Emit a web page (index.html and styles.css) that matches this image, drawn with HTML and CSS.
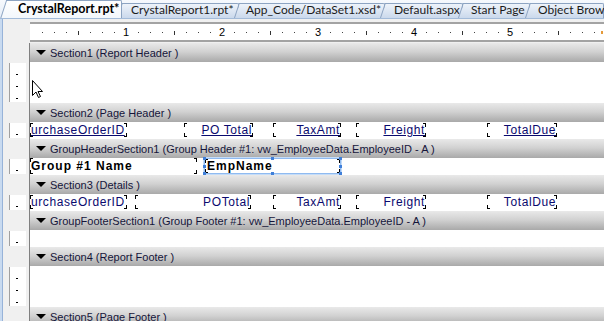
FILE: index.html
```html
<!doctype html>
<html lang="en">
<head>
    <meta charset="UTF-8">
    <meta name="viewport" content="width=device-width, initial-scale=1.0">
    <title>CrystalReport.rpt</title>
    <link rel="stylesheet" href="styles.css">
</head>
<body>
<div class="tabs">
    <div class="tab active t1">CrystalReport.rpt*</div>
    <div class="tab t2">CrystalReport1.rpt*</div>
    <div class="tab t3">App_Code/DataSet1.xsd*</div>
    <div class="tab t4">Default.aspx</div>
    <div class="tab t5">Start Page</div>
    <div class="tab t6">Object Brows</div>
</div>

<div class="frame">
    <div class="canvas">
        <div class="ruler">
            <span class="inch"><b>1</b></span>
            <span class="inch"><b>2</b></span>
            <span class="inch"><b>3</b></span>
            <span class="inch"><b>4</b></span>
            <span class="inch"><b>5</b></span>
        </div>

        <div class="row head"><span class="vr"></span><div class="bar"><i class="tri"></i>Section1 (Report Header&nbsp;)</div></div>
        <div class="row body tall"><span class="vr"></span>
            <div class="area">
                <svg class="cursor" width="13" height="20" viewBox="0 0 13 20">
                    <path d="M0.5 0.5 L0.5 15.5 L4 12 L6.5 17.5 L8.5 16.5 L6 11.5 L10.5 11.5 Z" fill="#fff" stroke="#000" stroke-width="1"/>
                </svg>
            </div>
        </div>

        <div class="row head"><span class="vr"></span><div class="bar"><i class="tri"></i>Section2 (Page Header&nbsp;)</div></div>
        <div class="row body"><span class="vr"></span>
            <div class="area">
                <span class="fld ul c-id">urchaseOrderID</span>
                <span class="fld ul r c-po">PO Total</span>
                <span class="fld ul r c-tax">TaxAmt</span>
                <span class="fld ul r c-fr">Freight</span>
                <span class="fld ul r c-due">TotalDue</span>
            </div>
        </div>

        <div class="row head"><span class="vr"></span><div class="bar"><i class="tri"></i>GroupHeaderSection1 (Group Header #1: vw_EmployeeData.EmployeeID - A )</div></div>
        <div class="row body"><span class="vr"></span>
            <div class="area">
                <span class="fld bold c-grp">Group #1 Name</span>
                <span class="fld bold sel c-emp">EmpName</span>
            </div>
        </div>

        <div class="row head"><span class="vr"></span><div class="bar"><i class="tri"></i>Section3 (Details&nbsp;)</div></div>
        <div class="row body"><span class="vr"></span>
            <div class="area">
                <span class="fld c-id">urchaseOrderID</span>
                <span class="fld r c-po2">POTotal</span>
                <span class="fld r c-tax">TaxAmt</span>
                <span class="fld r c-fr">Freight</span>
                <span class="fld r c-due">TotalDue</span>
            </div>
        </div>

        <div class="row head"><span class="vr"></span><div class="bar"><i class="tri"></i>GroupFooterSection1 (Group Footer #1: vw_EmployeeData.EmployeeID - A )</div></div>
        <div class="row body"><span class="vr"></span><div class="area"></div></div>

        <div class="row head"><span class="vr"></span><div class="bar"><i class="tri"></i>Section4 (Report Footer&nbsp;)</div></div>
        <div class="row body tall"><span class="vr"></span><div class="area"></div></div>

        <div class="row head"><span class="vr"></span><div class="bar"><i class="tri"></i>Section5 (Page Footer&nbsp;)</div></div>
    </div>
</div>
</body>
</html>
```

FILE: styles.css
```css
html, body {
    margin: 0;
    width: 604px;
    height: 321px;
    overflow: hidden;
    background-color: #f0f0f0;
}

/* document tabs */

.tabs {
    display: flex;
    align-items: flex-end;
    height: 18px;
    border-bottom: 1px solid #a3bbd9;
    background: linear-gradient(#f6f9fd, #e6eef8);
    overflow: hidden;
}

.tab {
    position: relative;
    z-index: 0;
    flex: none;
    box-sizing: border-box;
    height: 15px;
    line-height: 14px;
    padding-left: 9px;
    font-family: Lato, "Liberation Sans", sans-serif;
    font-size: 12px;
    color: #1b1b1b;
    white-space: nowrap;
}

.tab::before,
.tab::after {
    content: "";
    position: absolute;
    z-index: -1;
    top: 0;
    bottom: 0;
    background: linear-gradient(#eef3fa, #cbd9ec);
    border-top: 1px solid #8da4c2;
}

.tab::before {
    left: -5px;
    width: 12px;
    border-left: 1px solid #8da4c2;
    transform: skewX(-18deg);
    transform-origin: 0 100%;
}

.tab::after {
    left: 2px;
    right: 0;
    border-right: 1px solid #8da4c2;
    border-top-right-radius: 2px;
}

.tab.active {
    z-index: 2;
    height: 19px;
    margin-bottom: -1px;
    line-height: 17px;
    padding-left: 18px;
    font-size: 12.5px;
    font-weight: bold;
    color: #000;
}

.tab.active::before,
.tab.active::after {
    background: linear-gradient(#ffffff, #f2f6fb);
}

.tab.active::before {
    left: 0;
    width: 14px;
}

.tab.active::after {
    left: 7px;
}

.t1 { width: 122px; }
.t2 { width: 117px; }
.t3 { width: 146px; padding-left: 7px; }
.t4 { width: 78px; padding-left: 9px; }
.t5 { width: 67px; padding-left: 8px; }
.t6 { width: 74px; padding-left: 8px; }

/* designer frame */

.frame {
    border-left: 2px solid #c8daf0;
}

.canvas {
    border-left: 1px solid #97b3d9;
    padding-top: 3px;
    background-color: #f0f0f0;
}

.ruler {
    display: flex;
    height: 16px;
    margin-left: 27px;
    margin-bottom: 1px;
    border-top: 2px solid #a3a3a3;
    border-bottom: 2px solid #a3a3a3;
    background-color: #fff;
    background-image:
        linear-gradient(#e59a3a, #e59a3a),
        repeating-linear-gradient(90deg, #333 0 1px, transparent 1px 96px),
        repeating-linear-gradient(90deg, #444 0 1px, transparent 1px 12px);
    background-position: right 1px top 7px, 48px 7px, 12px 8px;
    background-size: 2px 3px, 100% 4px, 100% 1px;
    background-repeat: no-repeat;
    font-family: "Liberation Sans", Arial, sans-serif;
    font-size: 11px;
    line-height: 16px;
}

.inch {
    flex: none;
    display: flex;
    justify-content: flex-end;
    width: 96px;
}

.inch b {
    width: 8px;
    margin-right: -4px;
    font-weight: normal;
    text-align: center;
    background-color: #fff;
}

/* report sections */

.row {
    display: flex;
}

.vr {
    flex: none;
    box-sizing: border-box;
    width: 17px;
    margin-left: 6px;
    margin-right: 3px;
}

.head {
    height: 19px;
}

.bar {
    flex: 1;
    display: flex;
    align-items: center;
    padding-left: 6px;
    border-left: 1px solid #808080;
    background: linear-gradient(#e9e9e9, #d2d2d2 45%, #a9a9a9);
    font-family: "Liberation Sans", Arial, sans-serif;
    font-size: 11px;
    color: #15153a;
    white-space: nowrap;
}

.tri {
    width: 0;
    height: 0;
    margin-right: 4px;
    border-left: 5px solid transparent;
    border-right: 5px solid transparent;
    border-top: 5px solid #000;
}

.body {
    height: 17px;
}

.body.tall {
    height: 41px;
}

.body .vr {
    margin-top: 1px;
    margin-bottom: 1px;
    border-left: 1px solid #a0a0a0;
    background-color: #fff;
    background-image: repeating-linear-gradient(transparent 0 11px, #000 11px 12px);
    background-position: 6px 0;
    background-size: 2px 100%;
    background-repeat: no-repeat;
}

.area {
    flex: 1;
    position: relative;
    border-left: 1px solid #808080;
    background-color: #fff;
}

.cursor {
    position: absolute;
    left: 2px;
    top: 18px;
}

/* report fields sit on the design canvas */

.fld {
    position: absolute;
    top: 1px;
    box-sizing: border-box;
    height: 14px;
    line-height: 14px;
    padding-left: 1px;
    font-family: "Liberation Sans", Arial, sans-serif;
    font-size: 12px;
    letter-spacing: 0.6px;
    color: #0a0a6e;
    white-space: nowrap;
    overflow: hidden;
    background:
        linear-gradient(#000, #000) left top / 3px 1px,
        linear-gradient(#000, #000) left top / 1px 4px,
        linear-gradient(#000, #000) right top / 3px 1px,
        linear-gradient(#000, #000) right top / 1px 4px,
        linear-gradient(#000, #000) left bottom / 3px 1px,
        linear-gradient(#000, #000) left bottom / 1px 4px,
        linear-gradient(#000, #000) right bottom / 3px 1px,
        linear-gradient(#000, #000) right bottom / 1px 4px;
    background-repeat: no-repeat;
}

.fld.r {
    text-align: right;
    padding-left: 0;
    padding-right: 1px;
}

.fld.ul {
    text-decoration: underline;
}

.fld.bold {
    font-weight: bold;
    letter-spacing: 1px;
    color: #000;
    top: 0;
    height: 16px;
    line-height: 16px;
}

.fld.sel {
    overflow: visible;
    border: 1px solid #8fbaf0;
    box-shadow: 0 0 0 1px #c4dcf8;
    padding-left: 2px;
    line-height: 14px;
}

.fld.sel::after {
    content: "";
    position: absolute;
    inset: -2px;
    background:
        linear-gradient(#3f7fd9, #3f7fd9) left top / 3px 3px,
        linear-gradient(#3f7fd9, #3f7fd9) center top / 3px 3px,
        linear-gradient(#3f7fd9, #3f7fd9) right top / 3px 3px,
        linear-gradient(#3f7fd9, #3f7fd9) left center / 3px 3px,
        linear-gradient(#3f7fd9, #3f7fd9) right center / 3px 3px,
        linear-gradient(#3f7fd9, #3f7fd9) left bottom / 3px 3px,
        linear-gradient(#3f7fd9, #3f7fd9) center bottom / 3px 3px,
        linear-gradient(#3f7fd9, #3f7fd9) right bottom / 3px 3px;
    background-repeat: no-repeat;
}

.c-id  { left: 0;     width: 97px; }
.c-po  { left: 154px; width: 69px; }
.c-po2 { left: 105px; width: 116px; }
.c-tax { left: 243px; width: 68px; }
.c-fr  { left: 326px; width: 70px; }
.c-due { left: 457px; width: 70px; }
.c-grp { left: 0;     width: 167px; }
.c-emp { left: 174px; width: 137px; }
```
